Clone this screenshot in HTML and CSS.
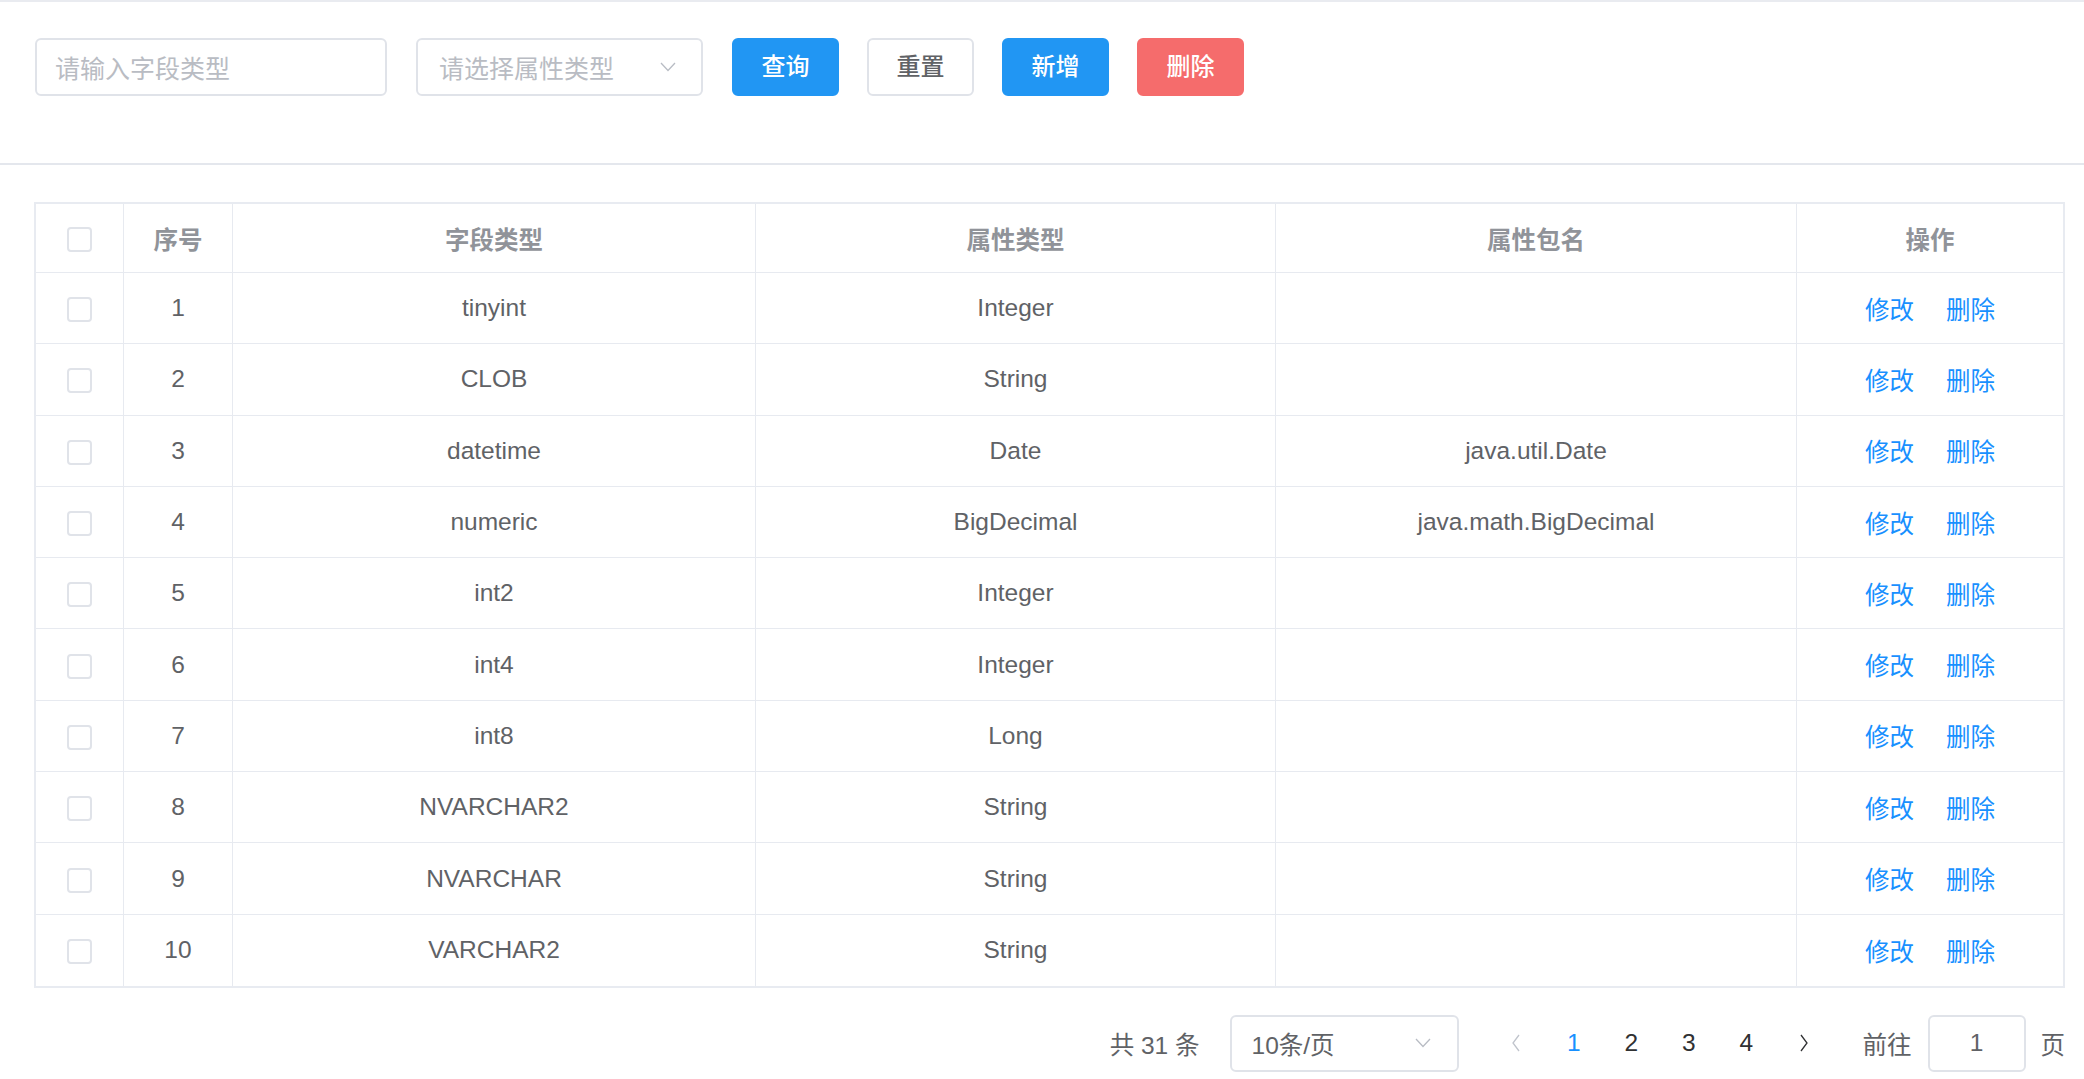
FILE: index.html
```html
<!DOCTYPE html>
<html lang="zh-CN">
<head>
<meta charset="utf-8">
<title>字段类型</title>
<link rel="stylesheet" href="styles.css">
</head>
<body>
<div class="search-card">
  <form class="search-form">
    <div class="input field-input"><span class="placeholder">请输入字段类型</span></div>
    <div class="input select-input">
      <span class="placeholder">请选择属性类型</span>
      <svg class="chev" width="16" height="10" viewBox="0 0 16 10"><polyline points="1,1 8,8.5 15,1" fill="none" stroke="#b8bcc4" stroke-width="1.3"/></svg>
    </div>
    <button type="button" class="btn btn-primary">查询</button>
    <button type="button" class="btn btn-default">重置</button>
    <button type="button" class="btn btn-primary">新增</button>
    <button type="button" class="btn btn-danger">删除</button>
  </form>
</div>

<div class="main">
  <table class="grid">
    <colgroup>
      <col class="c-sel"><col class="c-idx"><col class="c-field"><col class="c-attr"><col class="c-pkg"><col>
    </colgroup>
    <thead>
      <tr>
        <th><span class="checkbox"></span></th>
        <th>序号</th>
        <th>字段类型</th>
        <th>属性类型</th>
        <th>属性包名</th>
        <th class="last">操作</th>
      </tr>
    </thead>
    <tbody>
      <tr><td><span class="checkbox"></span></td><td>1</td><td>tinyint</td><td>Integer</td><td></td><td class="last"><a class="link">修改</a><a class="link">删除</a></td></tr>
      <tr><td><span class="checkbox"></span></td><td>2</td><td>CLOB</td><td>String</td><td></td><td class="last"><a class="link">修改</a><a class="link">删除</a></td></tr>
      <tr><td><span class="checkbox"></span></td><td>3</td><td>datetime</td><td>Date</td><td>java.util.Date</td><td class="last"><a class="link">修改</a><a class="link">删除</a></td></tr>
      <tr><td><span class="checkbox"></span></td><td>4</td><td>numeric</td><td>BigDecimal</td><td>java.math.BigDecimal</td><td class="last"><a class="link">修改</a><a class="link">删除</a></td></tr>
      <tr><td><span class="checkbox"></span></td><td>5</td><td>int2</td><td>Integer</td><td></td><td class="last"><a class="link">修改</a><a class="link">删除</a></td></tr>
      <tr><td><span class="checkbox"></span></td><td>6</td><td>int4</td><td>Integer</td><td></td><td class="last"><a class="link">修改</a><a class="link">删除</a></td></tr>
      <tr><td><span class="checkbox"></span></td><td>7</td><td>int8</td><td>Long</td><td></td><td class="last"><a class="link">修改</a><a class="link">删除</a></td></tr>
      <tr><td><span class="checkbox"></span></td><td>8</td><td>NVARCHAR2</td><td>String</td><td></td><td class="last"><a class="link">修改</a><a class="link">删除</a></td></tr>
      <tr><td><span class="checkbox"></span></td><td>9</td><td>NVARCHAR</td><td>String</td><td></td><td class="last"><a class="link">修改</a><a class="link">删除</a></td></tr>
      <tr class="final"><td><span class="checkbox"></span></td><td>10</td><td>VARCHAR2</td><td>String</td><td></td><td class="last"><a class="link">修改</a><a class="link">删除</a></td></tr>
    </tbody>
  </table>

  <div class="pagination">
    <span class="total">共 31 条</span>
    <div class="input size-select">
      <span class="size-text">10条/页</span>
      <svg class="chev" width="16" height="10" viewBox="0 0 16 10"><polyline points="1,1 8,8.5 15,1" fill="none" stroke="#b8bcc4" stroke-width="1.3"/></svg>
    </div>
    <ul class="pager">
      <li class="arrow"><svg width="10" height="18" viewBox="0 0 10 18"><polyline points="8,1 2,9 8,17" fill="none" stroke="#c0c4cc" stroke-width="1.3"/></svg></li>
      <li class="num active">1</li>
      <li class="num">2</li>
      <li class="num">3</li>
      <li class="num">4</li>
      <li class="arrow"><svg width="10" height="18" viewBox="0 0 10 18"><polyline points="2,1 8,9 2,17" fill="none" stroke="#303133" stroke-width="1.3"/></svg></li>
    </ul>
    <span class="jump">前往</span>
    <div class="input jump-input">1</div>
    <span class="jump-tail">页</span>
  </div>
</div>
</body>
</html>
```

FILE: styles.css
```css
* { box-sizing: border-box; }

html, body {
  margin: 0;
  padding: 0;
  background: #fff;
}

body {
  font-family: "Liberation Sans", "Noto Sans CJK SC", sans-serif;
  color: #606266;
}

.search-card {
  height: 165px;
  border-top: 2px solid #e9ebf0;
  border-bottom: 2px solid #e4e7ed;
  padding: 36px 0 0 35px;
}

.search-form {
  display: flex;
  align-items: center;
  height: 58px;
}

.input {
  height: 58px;
  border: 2px solid #e0e3e9;
  border-radius: 6px;
  background: #fff;
  display: flex;
  align-items: center;
  font-size: 25px;
}

.placeholder {
  color: #b9bcc3;
}

.field-input {
  width: 352px;
  padding-left: 18px;
  margin-right: 29px;
}

.select-input {
  width: 287px;
  padding: 0 25px 0 21px;
  justify-content: space-between;
  margin-right: 29px;
}

.chev { display: block; }

.btn {
  height: 58px;
  width: 107px;
  border-radius: 6px;
  font-family: inherit;
  font-size: 24px;
  font-weight: 500;
  border: 2px solid transparent;
  margin-right: 28px;
  padding: 0;
  line-height: 1;
}

.btn-primary {
  background: #2196f3;
  border-color: #2196f3;
  color: #fff;
}

.btn-default {
  background: #fff;
  border-color: #e0e3e9;
  color: #606266;
}

.btn-danger {
  background: #f56c6c;
  border-color: #f56c6c;
  color: #fff;
}

.main {
  padding: 37px 19px 0 34px;
}

.grid {
  width: 2031px;
  table-layout: fixed;
  border-collapse: separate;
  border-spacing: 0;
  border: 2px solid #e8ebf1;
  font-size: 24.5px;
}

.c-sel { width: 88px; }
.c-idx { width: 109px; }
.c-field { width: 523px; }
.c-attr { width: 520px; }
.c-pkg { width: 521px; }

.grid th, .grid td {
  text-align: center;
  vertical-align: middle;
  padding: 0;
  border-right: 1px solid #e7eaf0;
  border-bottom: 1px solid #e7eaf0;
}

.grid th.last, .grid td.last { border-right: none; }
.grid tr.final td { border-bottom: none; }

.grid th {
  height: 69px;
  color: #909399;
  font-weight: 700;
}

.grid td {
  height: 71.3px;
  color: #606266;
}

.checkbox {
  display: inline-block;
  width: 25px;
  height: 25px;
  border: 2px solid #e0e3e9;
  border-radius: 4px;
  background: #fff;
  vertical-align: middle;
}

.link {
  color: #1890ff;
  font-size: 24.5px;
  cursor: pointer;
}

.link + .link { margin-left: 32px; }

.pagination {
  display: flex;
  justify-content: flex-end;
  align-items: center;
  margin-top: 27px;
  height: 57px;
  font-size: 24.5px;
}

.total {
  color: #606266;
  margin-right: 30px;
}

.size-select {
  width: 229px;
  height: 57px;
  padding: 0 26px 0 20px;
  justify-content: space-between;
  color: #606266;
  font-size: 24.5px;
}

.pager {
  list-style: none;
  margin: 0 30px 0 29px;
  padding: 0;
  display: flex;
  align-items: center;
}

.pager li {
  width: 57.5px;
  text-align: center;
  color: #303133;
  font-size: 24.5px;
  display: flex;
  justify-content: center;
  align-items: center;
  height: 57px;
}

.pager li.active { color: #1890ff; }

.jump { color: #606266; }

.jump-input {
  width: 98px;
  height: 57px;
  margin: 0 15px 0 16px;
  justify-content: center;
  color: #606266;
  font-size: 24.5px;
}

.jump-tail { color: #606266; }
```
